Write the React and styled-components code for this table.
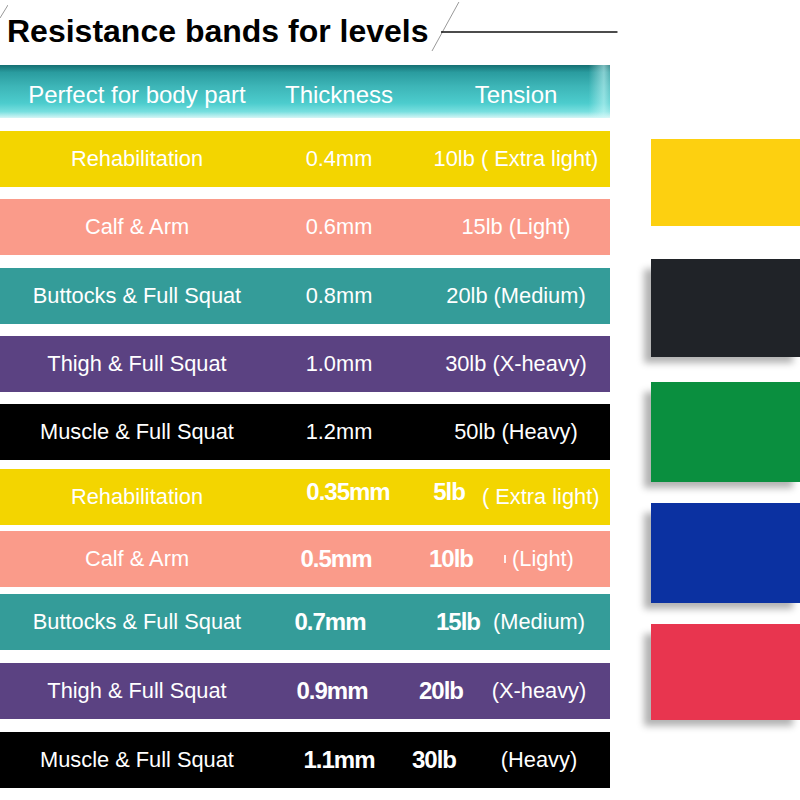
import React from "react";
import styled, { createGlobalStyle } from "styled-components";

const GlobalStyle = createGlobalStyle`
	html, body {
		margin: 0;
		padding: 0;
		background: #fff;
	}
	body {
		font-family: "Liberation Sans", Arial, sans-serif;
	}
`;

const COLORS = {
	yellow: "#f3d500",
	salmon: "#fa9b8a",
	teal: "#349c99",
	purple: "#5b4282",
	black: "#000000",
};

const plainRows = [
	{ color: "yellow", part: "Rehabilitation", thick: "0.4mm", tension: "10lb ( Extra light)", gap: 13 },
	{ color: "salmon", part: "Calf & Arm", thick: "0.6mm", tension: "15lb (Light)", gap: 12 },
	{ color: "teal", part: "Buttocks & Full Squat", thick: "0.8mm", tension: "20lb (Medium)", gap: 13 },
	{ color: "purple", part: "Thigh & Full Squat", thick: "1.0mm", tension: "30lb (X-heavy)", gap: 12 },
	{ color: "black", part: "Muscle & Full Squat", thick: "1.2mm", tension: "50lb (Heavy)", gap: 12 },
];

// second set: thickness & weight in bold, nudged like the original artwork
const boldRows = [
	{ color: "yellow", part: "Rehabilitation", thick: "0.35mm", weight: "5lb", level: "( Extra light)", gap: 9, tdx: 5, wdx: 2, dy: -5 },
	{ color: "salmon", part: "Calf & Arm", thick: "0.5mm", weight: "10lb", level: "(Light)", gap: 6, tdx: -7, wdx: 4, dy: 0, tick: true },
	{ color: "teal", part: "Buttocks & Full Squat", thick: "0.7mm", weight: "15lb", level: "(Medium)", gap: 7, tdx: -13, wdx: 11, dy: 0 },
	{ color: "purple", part: "Thigh & Full Squat", thick: "0.9mm", weight: "20lb", level: "(X-heavy)", gap: 13, tdx: -11, wdx: -6, dy: 0 },
	{ color: "black", part: "Muscle & Full Squat", thick: "1.1mm", weight: "30lb", level: "(Heavy)", gap: 13, tdx: -4, wdx: -13, dy: 0 },
];

const bands = [
	{ color: "#fdd010", top: 139, height: 87, shadow: false },
	{ color: "#202328", top: 33, height: 98, shadow: true },
	{ color: "#0a8f3f", top: 25, height: 100, shadow: true },
	{ color: "#0b31a1", top: 21, height: 100, shadow: true },
	{ color: "#e8354f", top: 21, height: 96, shadow: true },
];

const App = () => {
	return (
		<>
			<GlobalStyle />
			<Page>
				<TableColumn>
					<TitleBar>
						<SmallSlash viewBox="0 0 8 20">
							<line x1="0" y1="18" x2="8" y2="5" stroke="#999" strokeWidth="1" />
						</SmallSlash>
						<Title>Resistance bands for levels</Title>
						<TitleDecor viewBox="0 0 190 56" preserveAspectRatio="none">
							<line x1="3" y1="51" x2="30" y2="2" stroke="#999" strokeWidth="1" />
							<line x1="12" y1="32" x2="189" y2="32" stroke="#111" strokeWidth="1.6" />
						</TitleDecor>
					</TitleBar>

					<HeaderBar>
						<Cell>Perfect for body part</Cell>
						<Cell>Thickness</Cell>
						<TensionCell>Tension</TensionCell>
					</HeaderBar>

					{plainRows.map((row) => (
						<Row key={row.thick} $bg={COLORS[row.color]} $gap={row.gap}>
							<Cell>{row.part}</Cell>
							<Cell>{row.thick}</Cell>
							<TensionCell>{row.tension}</TensionCell>
						</Row>
					))}

					{boldRows.map((row) => (
						<SplitRow key={row.thick} $bg={COLORS[row.color]} $gap={row.gap}>
							<Cell>{row.part}</Cell>
							<BoldValue $dx={row.tdx} $dy={row.dy}>
								{row.thick}
							</BoldValue>
							<BoldValue $dx={row.wdx} $dy={row.dy}>
								{row.weight}
							</BoldValue>
							<LevelCell>
								{row.tick && <Tick />}
								{row.level}
							</LevelCell>
						</SplitRow>
					))}
				</TableColumn>

				<BandColumn>
					{bands.map((band, i) => (
						<Band
							key={i}
							$color={band.color}
							$top={band.top}
							$height={band.height}
							$shadow={band.shadow}
						/>
					))}
				</BandColumn>
			</Page>
		</>
	);
};

export default App;

const Page = styled.div`
	display: flex;
	width: 800px;
	height: 800px;
	overflow: hidden;
	background: #fff;
`;

const TableColumn = styled.div`
	display: flex;
	flex-direction: column;
	width: 618px;
	flex: none;
`;

const TitleBar = styled.div`
	display: flex;
	align-items: flex-start;
	height: 65px;
`;

const SmallSlash = styled.svg`
	width: 8px;
	height: 20px;
	flex: none;
`;

const Title = styled.h1`
	margin: 15px 0 0 -1px;
	font-size: 32px;
	font-weight: bold;
	color: #000;
	line-height: 32px;
	white-space: nowrap;
`;

const TitleDecor = styled.svg`
	flex: 1;
	height: 56px;
`;

const gridRow = `
	display: grid;
	align-items: center;
	width: 610px;
	color: #fff;
	box-sizing: border-box;
`;

const HeaderBar = styled.div`
	${gridRow}
	grid-template-columns: 274px 130px 1fr;
	height: 53px;
	padding-top: 6px;
	font-size: 24px;
	background:
		linear-gradient(to right, rgba(255, 255, 255, 0) 96.5%, rgba(210, 250, 250, 0.55) 99%, rgba(255, 255, 255, 0.2) 100%),
		linear-gradient(
			to bottom,
			#146f72 0%,
			#2a9c9f 14%,
			#3db5b7 40%,
			#4ccccd 72%,
			#78dfdf 88%,
			#d6f6f6 100%
		);
`;

const Row = styled.div`
	${gridRow}
	grid-template-columns: 274px 130px 1fr;
	height: 56px;
	margin-top: ${(p) => p.$gap}px;
	background: ${(p) => p.$bg};
	font-size: 21.8px;
`;

const SplitRow = styled.div`
	${gridRow}
	grid-template-columns: 274px 138px 70px 1fr;
	height: 56px;
	margin-top: ${(p) => p.$gap}px;
	background: ${(p) => p.$bg};
	font-size: 21.8px;
`;

const Cell = styled.div`
	text-align: center;
	white-space: nowrap;
`;

const TensionCell = styled(Cell)`
	padding-left: 18px;
`;

const BoldValue = styled(Cell)`
	font-size: 24px;
	font-weight: bold;
	letter-spacing: -1px;
	transform: translate(${(p) => p.$dx}px, ${(p) => p.$dy}px);
`;

const LevelCell = styled(Cell)`
	padding-right: 14px;
	display: flex;
	align-items: center;
	justify-content: center;
`;

const Tick = styled.span`
	display: inline-block;
	width: 2px;
	height: 8px;
	margin-right: 6px;
	background: rgba(255, 255, 255, 0.85);
`;

const BandColumn = styled.div`
	display: flex;
	flex-direction: column;
	flex: 1;
	padding-left: 33px;
`;

const Band = styled.div`
	flex: none;
	margin-top: ${(p) => p.$top}px;
	height: ${(p) => p.$height}px;
	margin-right: -4px;
	background: ${(p) => p.$color};
	box-shadow: ${(p) =>
		p.$shadow ? "-9px 8px 7px -2px rgba(0, 0, 0, 0.3)" : "none"};
`;
